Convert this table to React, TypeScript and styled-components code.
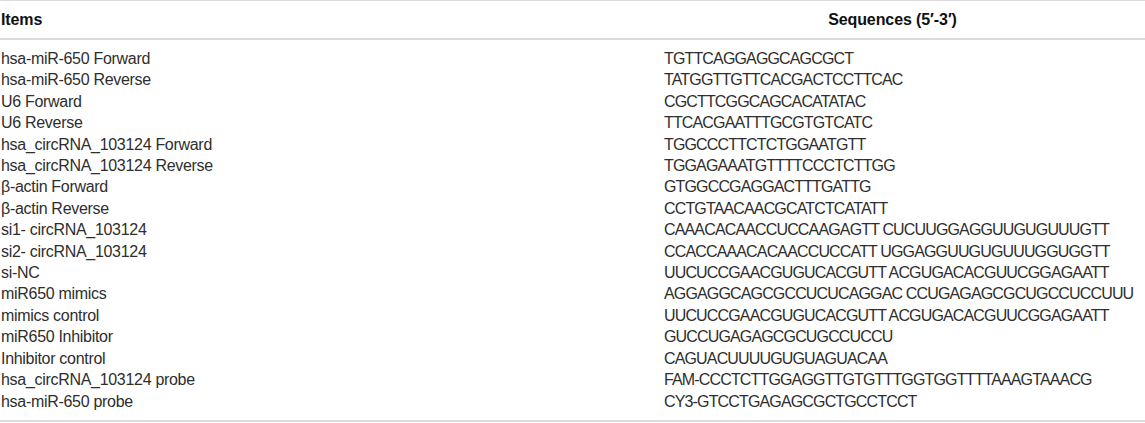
import React from 'react';
import styled, { createGlobalStyle } from 'styled-components';

// ─── Global ────────────────────────────────────────────────────────────────────
const GlobalStyle = createGlobalStyle`
  html, body {
    margin: 0;
    padding: 0;
    background: #ffffff;
  }
  body {
    font-family: "Liberation Sans", Arial, Helvetica, sans-serif;
    color: #2e2e2e;
  }
`;

// ─── Table ─────────────────────────────────────────────────────────────────────
const Table = styled.table`
  width: 1145px;
  border-collapse: collapse;
  table-layout: fixed;
  border-top: 1px solid #dcdcdc;
  border-bottom: 2px solid #dcdcdc;
  font-size: 16px;
`;

const HeadCell = styled.th<{ $align: 'left' | 'center' }>`
  height: 37px;
  padding: 0 0 0 ${(p) => (p.$align === 'left' ? '1px' : '0')};
  text-align: ${(p) => p.$align};
  font-weight: 700;
  color: #111;
  letter-spacing: -0.1px;
  border-bottom: 2px solid #dcdcdc;
  vertical-align: middle;
`;

const Row = styled.tr`
  &:first-child td { padding-top: 8px; }
  &:last-child td { padding-bottom: 8px; }
`;

const ItemCell = styled.td`
  padding: 0 0 0 1px;
  height: 21.4px;
  line-height: 21.4px;
  letter-spacing: -0.3px;
  white-space: nowrap;
`;

const SeqCell = styled.td`
  padding: 0 0 0 24px;
  height: 21.4px;
  line-height: 21.4px;
  letter-spacing: -0.85px;
  white-space: nowrap;
`;

// ─── Data ──────────────────────────────────────────────────────────────────────
const rows: [string, string][] = [
  ['hsa-miR-650 Forward', 'TGTTCAGGAGGCAGCGCT'],
  ['hsa-miR-650 Reverse', 'TATGGTTGTTCACGACTCCTTCAC'],
  ['U6 Forward', 'CGCTTCGGCAGCACATATAC'],
  ['U6 Reverse', 'TTCACGAATTTGCGTGTCATC'],
  ['hsa_circRNA_103124 Forward', 'TGGCCCTTCTCTGGAATGTT'],
  ['hsa_circRNA_103124 Reverse', 'TGGAGAAATGTTTTCCCTCTTGG'],
  ['β-actin Forward', 'GTGGCCGAGGACTTTGATTG'],
  ['β-actin Reverse', 'CCTGTAACAACGCATCTCATATT'],
  ['si1- circRNA_103124', 'CAAACACAACCUCCAAGAGTT CUCUUGGAGGUUGUGUUUGTT'],
  ['si2- circRNA_103124', 'CCACCAAACACAACCUCCATT UGGAGGUUGUGUUUGGUGGTT'],
  ['si-NC', 'UUCUCCGAACGUGUCACGUTT ACGUGACACGUUCGGAGAATT'],
  ['miR650 mimics', 'AGGAGGCAGCGCCUCUCAGGAC CCUGAGAGCGCUGCCUCCUUU'],
  ['mimics control', 'UUCUCCGAACGUGUCACGUTT ACGUGACACGUUCGGAGAATT'],
  ['miR650 Inhibitor', 'GUCCUGAGAGCGCUGCCUCCU'],
  ['Inhibitor control', 'CAGUACUUUUGUGUAGUACAA'],
  ['hsa_circRNA_103124 probe', 'FAM-CCCTCTTGGAGGTTGTGTTTGGTGGTTTTAAAGTAAACG'],
  ['hsa-miR-650 probe', 'CY3-GTCCTGAGAGCGCTGCCTCCT'],
];

// ─── Component ─────────────────────────────────────────────────────────────────
export default function App() {
  return (
    <>
      <GlobalStyle />
      <Table>
        <colgroup>
          <col style={{ width: 640 }} />
          <col />
        </colgroup>
        <thead>
          <tr>
            <HeadCell $align="left">Items</HeadCell>
            <HeadCell $align="center">Sequences (5′-3′)</HeadCell>
          </tr>
        </thead>
        <tbody>
          {rows.map(([item, seq]) => (
            <Row key={item}>
              <ItemCell>{item}</ItemCell>
              <SeqCell>{seq}</SeqCell>
            </Row>
          ))}
        </tbody>
      </Table>
    </>
  );
}
